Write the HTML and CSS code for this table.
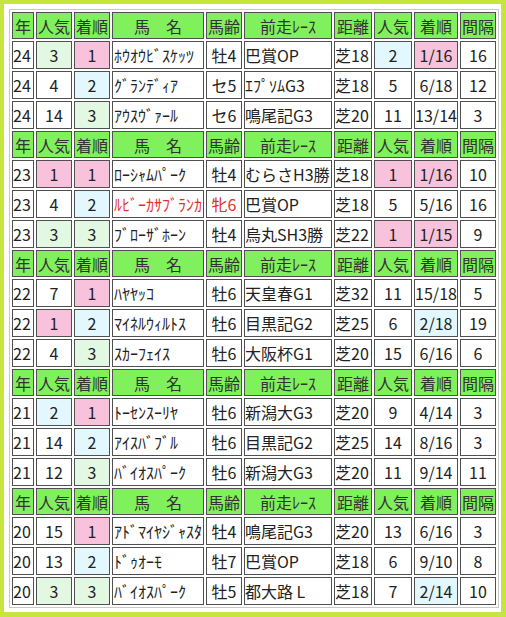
FILE: index.html
```html
<!DOCTYPE html>
<html lang="ja">
<head>
<meta charset="utf-8">
<link rel="stylesheet" href="styles.css">
</head>
<body>
<div class="frame">
<table class="tbl">
<colgroup>
<col class="c-yr"><col class="c-pop"><col class="c-rank"><col class="c-name"><col class="c-age"><col class="c-race"><col class="c-dist"><col class="c-pop2"><col class="c-res"><col class="c-int">
</colgroup>
<tbody>
<tr class="hd"><th>年</th><th>人気</th><th>着順</th><th>馬　名</th><th>馬齢</th><th>前走ﾚｰｽ</th><th>距離</th><th>人気</th><th>着順</th><th>間隔</th></tr>
<tr><td class="l">24</td><td class="g">3</td><td class="p">1</td><td class="n">ﾎｳｵｳﾋﾞｽｹｯﾂ</td><td>牡4</td><td class="l">巴賞OP</td><td class="l">芝18</td><td class="b">2</td><td class="p">1/16</td><td>16</td></tr>
<tr><td class="l">24</td><td>4</td><td class="b">2</td><td class="n">ｸﾞﾗﾝﾃﾞｨｱ</td><td>セ5</td><td class="l">ｴﾌﾟｿﾑG3</td><td class="l">芝18</td><td>5</td><td>6/18</td><td>12</td></tr>
<tr><td class="l">24</td><td>14</td><td class="g">3</td><td class="n">ｱｳｽｳﾞｧｰﾙ</td><td>セ6</td><td class="l">鳴尾記G3</td><td class="l">芝20</td><td>11</td><td>13/14</td><td>3</td></tr>
<tr class="hd"><th>年</th><th>人気</th><th>着順</th><th>馬　名</th><th>馬齢</th><th>前走ﾚｰｽ</th><th>距離</th><th>人気</th><th>着順</th><th>間隔</th></tr>
<tr><td class="l">23</td><td class="p">1</td><td class="p">1</td><td class="n">ﾛｰｼｬﾑﾊﾟｰｸ</td><td>牡4</td><td class="l">むらさH3勝</td><td class="l">芝18</td><td class="p">1</td><td class="p">1/16</td><td>10</td></tr>
<tr><td class="l">23</td><td>4</td><td class="b">2</td><td class="n red">ﾙﾋﾞｰｶｻﾌﾞﾗﾝｶ</td><td class="red">牝6</td><td class="l">巴賞OP</td><td class="l">芝18</td><td>5</td><td>5/16</td><td>16</td></tr>
<tr><td class="l">23</td><td class="g">3</td><td class="g">3</td><td class="n">ﾌﾞﾛｰｻﾞﾎｰﾝ</td><td>牡4</td><td class="l">烏丸SH3勝</td><td class="l">芝22</td><td class="p">1</td><td class="p">1/15</td><td>9</td></tr>
<tr class="hd"><th>年</th><th>人気</th><th>着順</th><th>馬　名</th><th>馬齢</th><th>前走ﾚｰｽ</th><th>距離</th><th>人気</th><th>着順</th><th>間隔</th></tr>
<tr><td class="l">22</td><td>7</td><td class="p">1</td><td class="n">ﾊﾔﾔｯｺ</td><td>牡6</td><td class="l">天皇春G1</td><td class="l">芝32</td><td>11</td><td>15/18</td><td>5</td></tr>
<tr><td class="l">22</td><td class="p">1</td><td class="b">2</td><td class="n">ﾏｲﾈﾙｳｨﾙﾄｽ</td><td>牡6</td><td class="l">目黒記G2</td><td class="l">芝25</td><td>6</td><td class="b">2/18</td><td>19</td></tr>
<tr><td class="l">22</td><td>4</td><td class="g">3</td><td class="n">ｽｶｰﾌｪｲｽ</td><td>牡6</td><td class="l">大阪杯G1</td><td class="l">芝20</td><td>15</td><td>6/16</td><td>6</td></tr>
<tr class="hd"><th>年</th><th>人気</th><th>着順</th><th>馬　名</th><th>馬齢</th><th>前走ﾚｰｽ</th><th>距離</th><th>人気</th><th>着順</th><th>間隔</th></tr>
<tr><td class="l">21</td><td class="b">2</td><td class="p">1</td><td class="n">ﾄｰｾﾝｽｰﾘﾔ</td><td>牡6</td><td class="l">新潟大G3</td><td class="l">芝20</td><td>9</td><td>4/14</td><td>3</td></tr>
<tr><td class="l">21</td><td>14</td><td class="b">2</td><td class="n">ｱｲｽﾊﾞﾌﾞﾙ</td><td>牡6</td><td class="l">目黒記G2</td><td class="l">芝25</td><td>14</td><td>8/16</td><td>3</td></tr>
<tr><td class="l">21</td><td>12</td><td class="g">3</td><td class="n">ﾊﾞｲｵｽﾊﾟｰｸ</td><td>牡6</td><td class="l">新潟大G3</td><td class="l">芝20</td><td>11</td><td>9/14</td><td>11</td></tr>
<tr class="hd"><th>年</th><th>人気</th><th>着順</th><th>馬　名</th><th>馬齢</th><th>前走ﾚｰｽ</th><th>距離</th><th>人気</th><th>着順</th><th>間隔</th></tr>
<tr><td class="l">20</td><td>15</td><td class="p">1</td><td class="n">ｱﾄﾞﾏｲﾔｼﾞｬｽﾀ</td><td>牡4</td><td class="l">鳴尾記G3</td><td class="l">芝20</td><td>13</td><td>6/16</td><td>3</td></tr>
<tr><td class="l">20</td><td>13</td><td class="b">2</td><td class="n">ﾄﾞｩｵｰﾓ</td><td>牡7</td><td class="l">巴賞OP</td><td class="l">芝18</td><td>6</td><td>9/10</td><td>8</td></tr>
<tr><td class="l">20</td><td class="g">3</td><td class="g">3</td><td class="n">ﾊﾞｲｵｽﾊﾟｰｸ</td><td>牡5</td><td class="l">都大路 L</td><td class="l">芝18</td><td>7</td><td class="b">2/14</td><td>10</td></tr>
</tbody>
</table>
</div>
</body>
</html>
```
FILE: styles.css
```css
html, body {
  margin: 0;
  padding: 0;
  background: #ffffff;
}
.frame {
  box-sizing: border-box;
  width: 506px;
  height: 617px;
  border: 4px solid #c6e63e;
  border-right-width: 5px;
  border-bottom-width: 5px;
  padding: 5px 3px 3px 5px;
  background: #ffffff;
}
.tbl {
  table-layout: fixed;
  width: 490px;
  border: 1px solid #c8c8c8;
  border-collapse: separate;
  border-spacing: 2px;
  font-family: "Noto Sans CJK JP", "Noto Sans", sans-serif;
  color: #222222;
}
.c-yr { width: 22px; }
.c-pop { width: 36px; }
.c-rank { width: 36px; }
.c-name { width: 92px; }
.c-age { width: 36px; }
.c-race { width: 88px; }
.c-dist { width: 38px; }
.c-pop2 { width: 38px; }
.c-res { width: 44px; }
.c-int { width: 36px; }
.tbl th, .tbl td {
  box-sizing: border-box;
  border: 1px solid #505050;
  padding: 0;
  text-align: center;
  vertical-align: middle;
  white-space: nowrap;
  overflow: hidden;
  font-size: 16px;
  line-height: 18px;
}
.tbl th {
  height: 27px;
  background: #80f05c;
  font-weight: normal;
  color: #333333;
}
.tbl td {
  height: 28px;
  background: #ffffff;
}
.tbl td.l { text-align: left; }
.tbl td.n {
  text-align: left;
  font-size: 16px;
  padding-left: 1px;
}
.tbl td.p { background: #f8c2dc; }
.tbl td.b { background: #e2f8fe; }
.tbl td.g { background: #e2f8e2; }
.tbl td.red { color: #e0302c; }
```
